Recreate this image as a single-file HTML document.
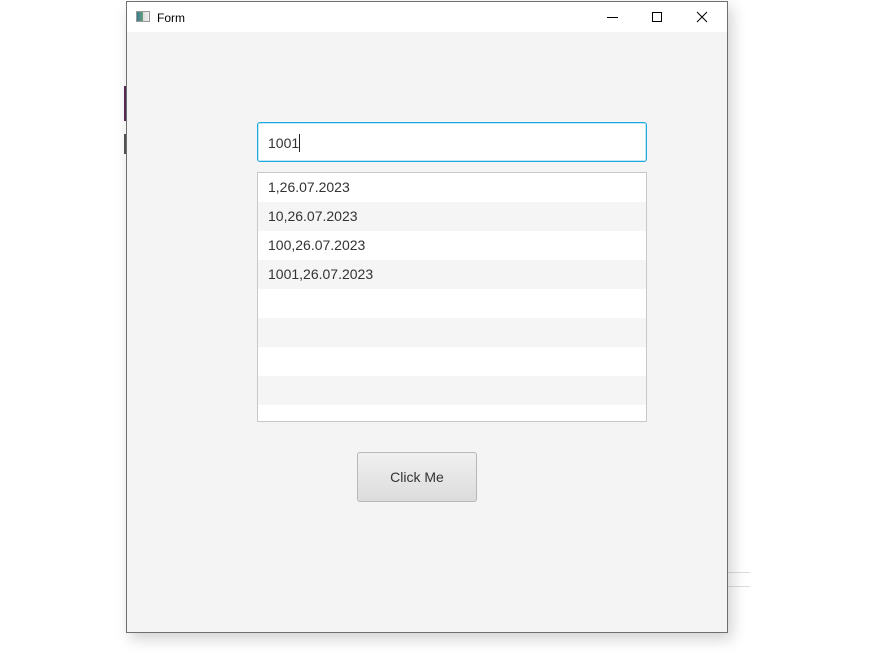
<!DOCTYPE html>
<html><head><meta charset="utf-8"><style>
*{margin:0;padding:0;box-sizing:border-box}
body{width:876px;height:654px;background:#fff;position:relative;overflow:hidden;font-family:"Liberation Sans",sans-serif}
.win{position:absolute;left:126px;top:1px;width:602px;height:632px;border:1px solid #6f6f6f;background:#f4f4f4;box-shadow:4px 6px 14px rgba(0,0,0,0.18)}
.tb{position:absolute;left:0;top:0;width:600px;height:30px;background:#fff}
.title{position:absolute;left:30px;top:9px;font-size:12px;color:#000}
.ico{position:absolute;left:9px;top:9px;width:14px;height:11px;border:1px solid #999;background:linear-gradient(90deg,#3a7a8a 0,#6aa080 50%,#ddd 50%,#eee 100%)}
.tf{position:absolute;left:257px;top:122px;width:390px;height:40px;border:1px solid #1fa8e0;border-radius:3px;background:#fff;box-shadow:0 0 0 1px #bfe6f5 inset;font-size:14px;color:#333;padding:11px 0 0 10px}
.caret{display:inline-block;width:1px;height:18px;background:#222;vertical-align:-4px}
.list{position:absolute;left:257px;top:172px;width:390px;height:250px;border:1px solid #c8c8c8;background:#fff;overflow:hidden}
.row{height:29px;font-size:14px;color:#333;padding:6px 0 0 10px}
.row:nth-child(even){background:#f5f5f5}
.btn{position:absolute;left:357px;top:452px;width:120px;height:50px;border:1px solid #b8b8b8;border-radius:3px;background:linear-gradient(#f0f0f0,#dcdcdc);font-size:14px;color:#333;text-align:center;line-height:48px}
</style></head><body>
<div style="position:absolute;left:124px;top:86px;width:3px;height:35px;background:#5a2a58"></div>
<div style="position:absolute;left:124px;top:134px;width:3px;height:20px;background:#555"></div>
<div style="position:absolute;left:728px;top:572px;width:22px;height:1px;background:#ddd"></div>
<div style="position:absolute;left:728px;top:586px;width:22px;height:1px;background:#ddd"></div>
<div class="win">
<div class="tb"><div class="ico"></div><div class="title">Form</div>
<svg style="position:absolute;left:470px;top:0" width="130" height="30"><path d="M10 15.5h11" stroke="#000" stroke-width="1"/><rect x="55.5" y="10.5" width="9" height="9" fill="none" stroke="#000"/><path d="M100 10l10 10M110 10l-10 10" stroke="#000" stroke-width="1"/></svg>
</div>
</div>
<div class="tf">1001<span class="caret"></span></div>
<div class="list">
<div class="row">1,26.07.2023</div><div class="row">10,26.07.2023</div><div class="row">100,26.07.2023</div><div class="row">1001,26.07.2023</div>
<div class="row"></div><div class="row"></div><div class="row"></div><div class="row"></div><div class="row"></div>
</div>
<div class="btn">Click Me</div>
</body></html>
